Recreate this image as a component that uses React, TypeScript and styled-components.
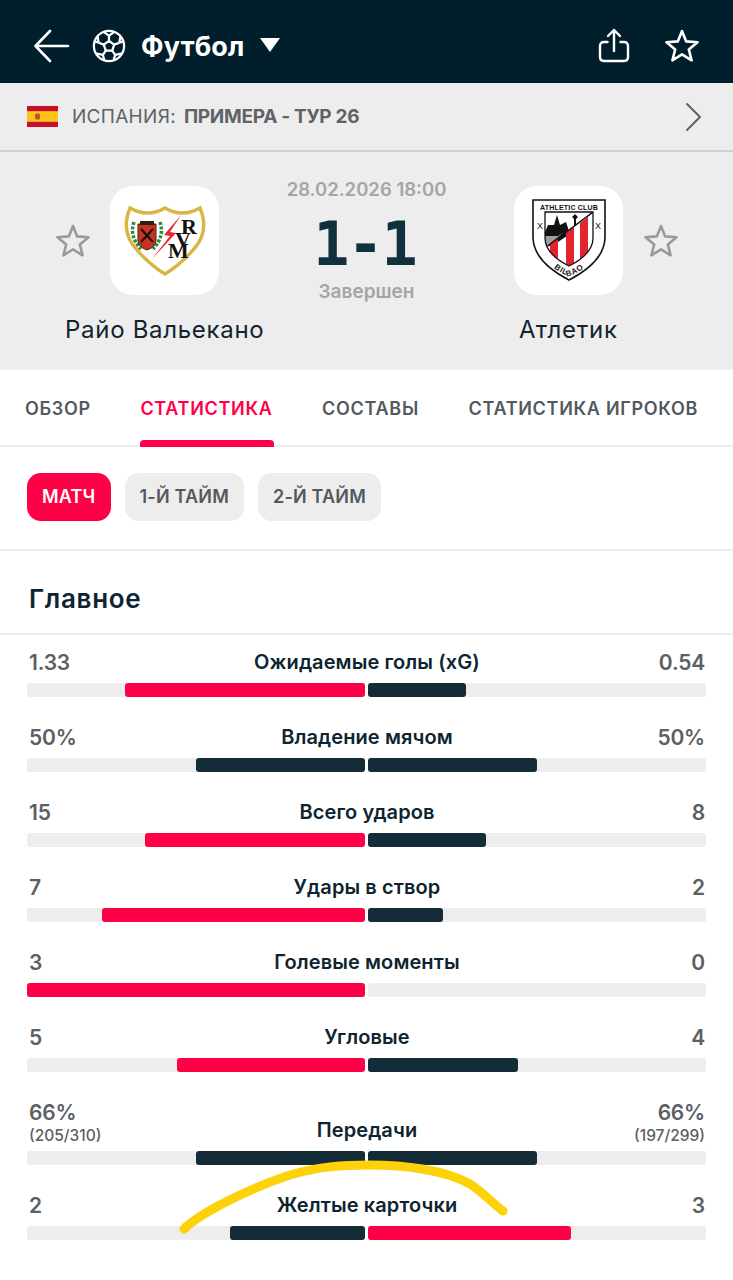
import React from 'react';
import styled, { createGlobalStyle } from 'styled-components';

const Global = createGlobalStyle`
  html, body { margin: 0; padding: 0; background: #fff; }
  body { font-family: Inter, "Noto Sans", sans-serif; overflow: hidden; }
  * { box-sizing: border-box; }
`;

const Page = styled.div`
  position: relative;
  width: 733px;
  height: 1280px;
  overflow: hidden;
  background: #fff;
`;

const Header = styled.header`
  height: 83px;
  background: #001e2b;
  color: #fff;
  display: flex;
  align-items: center;
  padding: 9px 34px 0;
`;
const BackIcon = styled.svg`
  width: 36px;
  height: 34px;
  margin-right: 22px;
`;
const Ball = styled.svg`
  width: 34px;
  height: 34px;
  margin-right: 15px;
`;
const SportName = styled.span`
  font-size: 27px;
  font-weight: 700;
  letter-spacing: 0.2px;
`;
const Caret = styled.svg`
  width: 20px;
  height: 14px;
  margin-left: 15px;
  margin-top: -2px;
`;
const HeaderActions = styled.div`
  margin-left: auto;
  display: flex;
  align-items: center;
  gap: 34px;
`;
const ActionIcon = styled.svg`
  display: block;
  width: 34px;
  height: 36px;
`;

const League = styled.div`
  height: 69px;
  background: #ededed;
  border-bottom: 2px solid #cfcfcf;
  display: flex;
  align-items: center;
  padding: 0 31px 0 27px;
  color: #5e6367;
  font-size: 19px;
`;
const Flag = styled.svg`
  width: 31px;
  height: 21px;
  margin-right: 14px;
`;
const Country = styled.span`
  letter-spacing: 0.3px;
  font-weight: 400;
  margin-right: 8px;
`;
const Round = styled.span`
  font-weight: 700;
  letter-spacing: -0.3px;
`;
const Chevron = styled.svg`
  margin-left: auto;
  width: 17px;
  height: 30px;
`;

const Match = styled.section`
  height: 218px;
  background: #ededed;
  display: grid;
  grid-template-columns: 1fr 160px 1fr;
  padding: 0 43px;
`;
const Team = styled.div`
  display: grid;
  grid-template-columns: 1fr 109px 1fr;
  grid-template-rows: 109px auto;
  align-items: center;
  align-content: start;
  padding-top: 34px;
`;
const TeamStar = styled.svg<{ $side: 'left' | 'right' }>`
  width: 36px;
  height: 36px;
  justify-self: ${(p) => (p.$side === 'left' ? 'end' : 'start')};
  margin: ${(p) => (p.$side === 'left' ? '0 19px 0 0' : '0 0 0 20px')};
  grid-column: ${(p) => (p.$side === 'left' ? 1 : 3)};
  grid-row: 1;
`;
const Tile = styled.div`
  grid-column: 2;
  grid-row: 1;
  width: 109px;
  height: 109px;
  background: #fff;
  border-radius: 23px;
`;
const Crest = styled.svg`
  display: block;
  width: 109px;
  height: 109px;
`;
const TeamName = styled.div`
  grid-column: 1 / -1;
  grid-row: 2;
  text-align: center;
  margin-top: 19px;
  font-size: 24px;
  line-height: 32px;
  letter-spacing: 0.7px;
  color: #12242f;
  white-space: nowrap;
`;
const Centre = styled.div`
  display: flex;
  flex-direction: column;
  align-items: center;
  padding-top: 25px;
`;
const DateText = styled.div`
  font-size: 18.5px;
  line-height: 24px;
  font-weight: 600;
  color: #a3a5a7;
  white-space: nowrap;
`;
const Score = styled.div`
  font-family: "DejaVu Sans Mono", monospace;
  font-size: 60px;
  font-weight: 700;
  line-height: 62px;
  margin: 12px 4px 0 0;
  letter-spacing: -2px;
  color: #10303d;
`;
const Status = styled.div`
  font-size: 19px;
  line-height: 24px;
  margin-top: 5px;
  font-weight: 600;
  color: #a3a5a7;
`;

const Tabs = styled.nav`
  height: 77px;
  border-bottom: 2px solid #ededed;
  display: flex;
  gap: 49.5px;
  padding-left: 25px;
`;
const Tab = styled.div<{ $active?: boolean }>`
  position: relative;
  height: 76px;
  line-height: 77px;
  font-size: 18px;
  font-weight: 600;
  letter-spacing: 0.7px;
  white-space: nowrap;
  color: ${(p) => (p.$active ? '#ff0046' : '#53595d')};
  &::after {
    content: '';
    display: ${(p) => (p.$active ? 'block' : 'none')};
    position: absolute;
    left: 0;
    right: -1px;
    bottom: -1px;
    height: 7px;
    border-radius: 4px 4px 0 0;
    background: #ff0046;
  }
`;

const Periods = styled.div`
  height: 104px;
  border-bottom: 2px solid #ededed;
  display: flex;
  align-items: center;
  gap: 14px;
  padding: 0 27px 3px;
`;
const Pill = styled.div<{ $active?: boolean }>`
  height: 48px;
  line-height: 48px;
  padding: 0 15px;
  border-radius: 14px;
  font-size: 18px;
  font-weight: 600;
  letter-spacing: 0.2px;
  background: ${(p) => (p.$active ? '#ff0046' : '#ededed')};
  color: ${(p) => (p.$active ? '#fff' : '#53595d')};
`;

const SectionTitle = styled.h2`
  margin: 0;
  height: 84px;
  border-bottom: 2px solid #ededed;
  padding: 32px 29px 0;
  font-size: 26px;
  line-height: 32px;
  font-weight: 600;
  letter-spacing: 0.7px;
  color: #0e2430;
`;

const StatList = styled.div`
  padding: 12px 27px 0;
`;
const StatRow = styled.div`
  padding-bottom: 25px;
`;
const StatText = styled.div`
  display: flex;
  justify-content: space-between;
  align-items: flex-end;
  padding: 0 1px 0 2px;
  margin-bottom: 6px;
`;
const ValueBlock = styled.div<{ $right?: boolean }>`
  display: flex;
  flex-direction: column;
  text-align: ${(p) => (p.$right ? 'right' : 'left')};
  width: 120px;
`;
const Value = styled.span`
  font-size: 21px;
  line-height: 32px;
  margin-bottom: -2px;
  font-weight: 600;
  letter-spacing: -0.2px;
  color: #5b6064;
`;
const SubValue = styled.span`
  font-size: 15.5px;
  line-height: 18px;
  font-weight: 500;
  color: #5b6064;
`;
const Label = styled.span`
  font-size: 20px;
  line-height: 30px;
  font-weight: 600;
  letter-spacing: 0.1px;
  color: #0e2430;
  white-space: nowrap;
`;
const Bar = styled.div`
  display: grid;
  grid-template-columns: 1fr 1fr;
  gap: 3px;
  height: 14px;
`;
const Half = styled.div<{ $right?: boolean }>`
  display: flex;
  justify-content: ${(p) => (p.$right ? 'flex-start' : 'flex-end')};
  background: #ededed;
  border-radius: 3px;
`;
const Fill = styled.div<{ $win: boolean }>`
  height: 100%;
  border-radius: 3px;
  background: ${(p) => (p.$win ? '#ff0046' : '#132c38')};
`;

const Scribble = styled.svg`
  position: absolute;
  left: 0;
  top: 0;
  width: 733px;
  height: 1280px;
  pointer-events: none;
`;

const STAR = 'M17 3 L21.2 13.4 L32.5 14.2 L23.8 21.4 L26.6 32.3 L17 26.4 L7.4 32.3 L10.2 21.4 L1.5 14.2 L12.8 13.4 Z';

type Stat = { label: string; l: string; r: string; lv: number; rv: number; lSub?: string; rSub?: string };
const stats: Stat[] = [
  { label: 'Ожидаемые голы (xG)', l: '1.33', r: '0.54', lv: 1.33, rv: 0.54 },
  { label: 'Владение мячом', l: '50%', r: '50%', lv: 50, rv: 50 },
  { label: 'Всего ударов', l: '15', r: '8', lv: 15, rv: 8 },
  { label: 'Удары в створ', l: '7', r: '2', lv: 7, rv: 2 },
  { label: 'Голевые моменты', l: '3', r: '0', lv: 3, rv: 0 },
  { label: 'Угловые', l: '5', r: '4', lv: 5, rv: 4 },
  { label: 'Передачи', l: '66%', r: '66%', lv: 66, rv: 66, lSub: '(205/310)', rSub: '(197/299)' },
  { label: 'Желтые карточки', l: '2', r: '3', lv: 2, rv: 3 },
];

const RayoCrest = () => (
  <Crest viewBox="0 0 109 109">
    <path d="M55 22 Q38 32 20 22 Q10 46 27 64 Q40 79 55 88 Q70 79 83 64 Q100 46 90 22 Q72 32 55 22 Z" fill="#fff" stroke="#d9b544" strokeWidth="3.4" />
    <path d="M24 36 Q19 50 31 63 M50 36 Q55 50 43 63" fill="none" stroke="#2f8a3e" strokeWidth="3.5" strokeDasharray="3 1.5" />
    <path d="M28 38 H46 V54 Q46 61 37 64 Q28 61 28 54 Z" fill="#c8321f" stroke="#3a2a15" strokeWidth="1" />
    <path d="M30 35 H44 V39 H30 Z" fill="#2a2014" />
    <path d="M31 43 L43 56 M43 43 L31 56" stroke="#111" strokeWidth="2" />
    <path d="M71 29 L54 49 L60 50 L42 73 L66 47 L60 46 Z" fill="#e8262c" />
    <text x="71 65 58" y="48 61 72" fontSize="22" fontFamily="Liberation Serif, serif" fontWeight="700" fill="#111">RVM</text>
  </Crest>
);

const AthleticCrest = () => (
  <Crest viewBox="0 0 109 109">
    <defs>
      <clipPath id="inner">
        <path d="M31 26 H79 V52 Q79 68 55 80 Q31 68 31 52 Z" />
      </clipPath>
      <path id="bilbao" d="M26 64 Q36 84 55 90 Q74 84 84 64" />
    </defs>
    <path d="M19 14 H91 V52 Q90 76 55 94 Q20 76 19 52 Z" fill="#fff" stroke="#111" strokeWidth="1.6" />
    <text x="55" y="24" textAnchor="middle" fontFamily="Liberation Sans, sans-serif" fontWeight="700" fontSize="7" letterSpacing="0.2" fill="#111">ATHLETIC CLUB</text>
    <g clipPath="url(#inner)">
      <rect x="31" y="26" width="48" height="54" fill="#fff" />
      <path d="M31 46 L34 39 L40 39 L43 29 L46 39 L52 36 L56 48 L38 60 L31 60 Z" fill="#111" />
      <path d="M31 50 H44 L50 46 L31 62 Z" fill="#9aa0a0" />
      <path d="M58 31 L61 28 L64 31 L62 33 L62 40 L60 40 L60 33 Z" fill="#111" />
      <path d="M36 57 L44 51 V80 H36 Z M52 46 L60 41 V80 H52 Z M66 37 L74 31 V80 H66 Z" fill="#e3232e" />
      <path d="M31 62 L79 26" stroke="#111" strokeWidth="1.4" />
    </g>
    <path d="M31 26 H79 V52 Q79 68 55 80 Q31 68 31 52 Z" fill="none" stroke="#111" strokeWidth="1.3" />
    <text x="26" y="43" textAnchor="middle" fontFamily="Liberation Sans, sans-serif" fontSize="9" fill="#111">X</text>
    <text x="84" y="43" textAnchor="middle" fontFamily="Liberation Sans, sans-serif" fontSize="9" fill="#111">X</text>
    <text fontFamily="Liberation Sans, sans-serif" fontWeight="700" fontSize="8" fill="#222" letterSpacing="0.6">
      <textPath href="#bilbao" startOffset="50%" textAnchor="middle">BILBAO</textPath>
    </text>
  </Crest>
);

const StatItem = ({ s }: { s: Stat }) => {
  const total = s.lv + s.rv;
  return (
    <StatRow>
      <StatText>
        <ValueBlock>
          <Value>{s.l}</Value>
          {s.lSub && <SubValue>{s.lSub}</SubValue>}
        </ValueBlock>
        <Label>{s.label}</Label>
        <ValueBlock $right>
          <Value>{s.r}</Value>
          {s.rSub && <SubValue>{s.rSub}</SubValue>}
        </ValueBlock>
      </StatText>
      <Bar>
        <Half>
          <Fill $win={s.lv > s.rv} style={{ width: `${(s.lv / total) * 100}%` }} />
        </Half>
        <Half $right>
          <Fill $win={s.rv > s.lv} style={{ width: `${(s.rv / total) * 100}%` }} />
        </Half>
      </Bar>
    </StatRow>
  );
};

export default function App() {
  return (
    <Page>
      <Global />
      <Header>
        <BackIcon viewBox="0 0 36 34" fill="none" stroke="#fff" strokeWidth="2.6" strokeLinecap="round" strokeLinejoin="round">
          <path d="M34 17 H2 M16 2 L1.5 17 L16 32" />
        </BackIcon>
        <Ball viewBox="0 0 36 36" fill="none" stroke="#fff" strokeWidth="2.4" strokeLinejoin="round">
          <circle cx="18" cy="18" r="16" />
          <path d="M18 12.5 L23.5 16.5 L21.4 23 L14.6 23 L12.5 16.5 Z" />
          <path d="M18 12.5 V7 M23.5 16.5 L29 14.5 M21.4 23 L24.5 27.5 M14.6 23 L11.5 27.5 M12.5 16.5 L7 14.5" />
          <path d="M12.5 3.2 L18 7 L23.5 3.2 M29 14.5 L33.5 13 M29 14.5 L30 8 M24.5 27.5 L31 26 M24.5 27.5 L23 33 M11.5 27.5 L13 33 M11.5 27.5 L5 26 M7 14.5 L6 8 M7 14.5 L2.5 13" />
        </Ball>
        <SportName>Футбол</SportName>
        <Caret viewBox="0 0 20 14" fill="#fff">
          <path d="M0 0 H20 L10 14 Z" />
        </Caret>
        <HeaderActions>
          <ActionIcon viewBox="0 0 34 36" fill="none" stroke="#fff" strokeWidth="2.4" strokeLinecap="round" strokeLinejoin="round">
            <path d="M10.5 14 H7 Q3 14 3 18 V29 Q3 33 7 33 H27 Q31 33 31 29 V18 Q31 14 27 14 H23.5" />
            <path d="M17 23 V2 M11 8 L17 2 L23 8" />
          </ActionIcon>
          <ActionIcon viewBox="0 0 34 36" fill="none" stroke="#fff" strokeWidth="2.6" strokeLinejoin="round">
            <path d={STAR} />
          </ActionIcon>
        </HeaderActions>
      </Header>

      <League>
        <Flag viewBox="0 0 31 21">
          <rect width="31" height="21" fill="#c8102e" />
          <rect y="5.2" width="31" height="10.6" fill="#fcc419" />
          <rect x="8" y="7.5" width="5" height="6" rx="1.5" fill="#c0562b" />
        </Flag>
        <Country>ИСПАНИЯ:</Country>
        <Round>ПРИМЕРА - ТУР 26</Round>
        <Chevron viewBox="0 0 17 30" fill="none" stroke="#5e6367" strokeWidth="2" strokeLinecap="round" strokeLinejoin="round">
          <path d="M2 2 L15 15 L2 28" />
        </Chevron>
      </League>

      <Match>
        <Team>
          <TeamStar $side="left" viewBox="0 0 34 36" fill="none" stroke="#999" strokeWidth="2.6" strokeLinejoin="round">
            <path d={STAR} />
          </TeamStar>
          <Tile><RayoCrest /></Tile>
          <TeamName>Райо Вальекано</TeamName>
        </Team>
        <Centre>
          <DateText>28.02.2026 18:00</DateText>
          <Score>1-1</Score>
          <Status>Завершен</Status>
        </Centre>
        <Team>
          <Tile><AthleticCrest /></Tile>
          <TeamStar $side="right" viewBox="0 0 34 36" fill="none" stroke="#999" strokeWidth="2.6" strokeLinejoin="round">
            <path d={STAR} />
          </TeamStar>
          <TeamName>Атлетик</TeamName>
        </Team>
      </Match>

      <Tabs>
        <Tab>ОБЗОР</Tab>
        <Tab $active>СТАТИСТИКА</Tab>
        <Tab>СОСТАВЫ</Tab>
        <Tab>СТАТИСТИКА ИГРОКОВ</Tab>
      </Tabs>

      <Periods>
        <Pill $active>МАТЧ</Pill>
        <Pill>1-Й ТАЙМ</Pill>
        <Pill>2-Й ТАЙМ</Pill>
      </Periods>

      <SectionTitle>Главное</SectionTitle>

      <StatList>
        {stats.map((s) => (
          <StatItem key={s.label} s={s} />
        ))}
      </StatList>

      <Scribble viewBox="0 0 733 1280" fill="none">
        <path
          d="M184 1229 C200 1213 250 1188 290 1175 C320 1166 345 1165 369 1165 C405 1165 445 1170 470 1184 C484 1193 492 1203 503 1211"
          stroke="#fdd20a"
          strokeWidth="9"
          strokeLinecap="round"
        />
      </Scribble>
    </Page>
  );
}
